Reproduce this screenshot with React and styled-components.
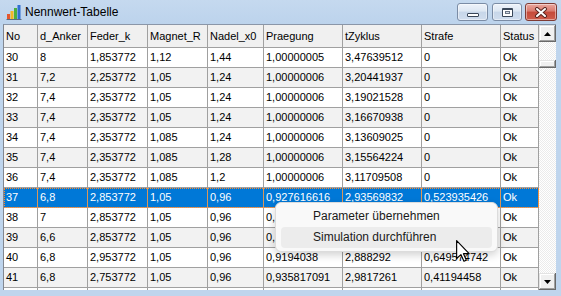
import React from "react";
import styled, { createGlobalStyle } from "styled-components";

const GlobalStyle = createGlobalStyle`
  html, body { margin: 0; padding: 0; background: #ffffff; }
  body { font-family: "Liberation Sans", Arial, sans-serif; }
  * { box-sizing: border-box; }
`;

const COLS = "34px 50px 60px 60px 56px 79px 79px 79px 38px";

const Window = styled.div`
  position: relative;
  width: 561px;
  height: 296px;
  background: #bfd5ed;
  display: flex;
  flex-direction: column;
  overflow: hidden;
`;

const TitleBar = styled.div`
  height: 24px;
  display: flex;
  align-items: flex-start;
  padding: 0 4px 0 6px;
  background: linear-gradient(#c5d9ef, #bcd3ec);
`;

const AppIcon = styled.svg`
  width: 16px;
  height: 16px;
  margin-top: 4px;
  margin-right: 3px;
  flex: none;
`;

const Title = styled.span`
  font-size: 12px;
  line-height: 24px;
  color: #000;
`;

const Captions = styled.div`
  margin-left: auto;
  margin-top: 3px;
  display: flex;
`;

const CapButton = styled.div`
  width: ${(p) => p.$w}px;
  height: 18px;
  margin-left: ${(p) => p.$gap || 0}px;
  border: 1px solid ${(p) => (p.$close ? "#7e3b34" : "#7b8ca5")};
  border-radius: 3px;
  display: flex;
  align-items: center;
  justify-content: center;
  background: ${(p) =>
    p.$close
      ? "linear-gradient(#eaa79f 0%, #d97a6e 45%, #c54a3a 50%, #cf5d4c 100%)"
      : "linear-gradient(#eef3fa 0%, #dde7f3 45%, #c7d6e9 50%, #d0ddee 100%)"};
  box-shadow: inset 0 0 0 1px rgba(255, 255, 255, 0.45);
`;

const MinGlyph = styled.div`
  width: 12px;
  height: 4px;
  margin-top: 6px;
  background: #fff;
  border: 1px solid #3a4759;
  border-radius: 1px;
`;

const MaxGlyph = styled.div`
  width: 11px;
  height: 9px;
  background: #fff;
  border: 1px solid #3a4759;
  border-top-width: 2px;
  border-radius: 1px;
  display: flex;
  align-items: center;
  justify-content: center;
`;

const MaxInner = styled.div`
  width: 5px;
  height: 3px;
  border: 1px solid #6a7585;
  background: #d4dbe5;
`;

const Body = styled.div`
  flex: 1;
  min-height: 0;
  display: flex;
  padding: 0 5px 6px 3px;
`;

const Frame = styled.div`
  flex: 1;
  display: flex;
  border-top: 1px solid #8a96a8;
  border-left: 1px solid #828790;
  overflow: hidden;
`;

const Grid = styled.div`
  width: 535px;
  background: #fff;
  overflow: hidden;
`;

const HeaderRow = styled.div`
  display: grid;
  grid-template-columns: ${COLS};
  height: 23px;
`;

const HeaderCell = styled.div`
  background: #f0f0f0;
  border-right: 1px solid #a0a0a0;
  border-bottom: 1px solid #a0a0a0;
  padding-left: 2px;
  font-size: 11px;
  line-height: 22px;
  color: #000;
  white-space: nowrap;
  overflow: hidden;
`;

const Row = styled.div`
  display: grid;
  grid-template-columns: ${COLS};
  height: 20px;
  background: ${(p) => (p.$selected ? "#0078d7" : p.$alt ? "#f2f2f2" : "#ffffff")};
  color: ${(p) => (p.$selected ? "#ffffff" : "#000000")};
  outline: ${(p) => (p.$selected ? "1px dotted #ff8a2e" : "none")};
  outline-offset: -1px;
`;

const Cell = styled.div`
  border-right: 1px solid ${(p) => (p.$selected ? "#d8965a" : "#a0a0a0")};
  border-bottom: 1px solid #a0a0a0;
  padding-left: 2px;
  font-size: 11px;
  line-height: 19px;
  white-space: nowrap;
  overflow: hidden;
`;

const Scrollbar = styled.div`
  width: 17px;
  display: flex;
  flex-direction: column;
  background: repeating-conic-gradient(#ffffff 0 25%, #ebebeb 0 50%) 0 0 / 2px 2px;
`;

const ScrollButton = styled.div`
  height: ${(p) => p.$h || 17}px;
  flex: none;
  display: flex;
  align-items: center;
  justify-content: center;
  background: #f0f0f0;
  box-shadow: inset -1px -1px #696969, inset 1px 1px #e3e3e3,
    inset -2px -2px #a0a0a0, inset 2px 2px #ffffff;
`;

const Track = styled.div`
  flex: 1;
  padding-top: 18px;
`;

const Arrow = styled.svg`
  width: 7px;
  height: 4px;
`;

const Menu = styled.div`
  position: absolute;
  left: 275px;
  top: 202px;
  width: 223px;
  padding: 3px 5px;
  background: #f9f9f9;
  border: 1px solid #dcdcdc;
  border-radius: 6px;
  box-shadow: 0 3px 8px rgba(0, 0, 0, 0.18);
`;

const MenuItem = styled.div`
  height: 21px;
  padding-left: 32px;
  font-size: 12px;
  line-height: 21px;
  color: #1a1a1a;
  border-radius: 4px;
  background: ${(p) => (p.$hover ? "#ececec" : "transparent")};
`;

const Cursor = styled.svg`
  position: absolute;
  left: 456px;
  top: 240px;
  width: 14px;
  height: 22px;
`;

const headers = ["No", "d_Anker", "Feder_k", "Magnet_R", "Nadel_x0", "Praegung", "tZyklus", "Strafe", "Status"];

const rows = [
  ["30", "8", "1,853772", "1,12", "1,44", "1,00000005", "3,47639512", "0", "Ok"],
  ["31", "7,2", "2,253772", "1,05", "1,24", "1,00000006", "3,20441937", "0", "Ok"],
  ["32", "7,4", "2,353772", "1,05", "1,24", "1,00000006", "3,19021528", "0", "Ok"],
  ["33", "7,4", "2,353772", "1,05", "1,24", "1,00000006", "3,16670938", "0", "Ok"],
  ["34", "7,4", "2,353772", "1,085", "1,24", "1,00000006", "3,13609025", "0", "Ok"],
  ["35", "7,4", "2,353772", "1,085", "1,28", "1,00000006", "3,15564224", "0", "Ok"],
  ["36", "7,4", "2,353772", "1,085", "1,2", "1,00000006", "3,11709508", "0", "Ok"],
  ["37", "6,8", "2,853772", "1,05", "0,96", "0,927616616", "2,93569832", "0,523935426", "Ok"],
  ["38", "7", "2,853772", "1,05", "0,96", "0,", "", "", "Ok"],
  ["39", "6,6", "2,853772", "1,05", "0,96", "0,", "", "", "Ok"],
  ["40", "6,8", "2,953772", "1,05", "0,96", "0,9194038", "2,888292", "0,649574742", "Ok"],
  ["41", "6,8", "2,753772", "1,05", "0,96", "0,935817091", "2,9817261", "0,41194458", "Ok"],
  ["", "", "", "", "", "", "", "", ""],
];

export default function App() {
  return (
    <>
      <GlobalStyle />
      <Window>
        <TitleBar>
          <AppIcon viewBox="0 0 16 16">
            <rect x="1" y="10" width="3" height="5" fill="#e4572e" />
            <rect x="4.5" y="7" width="3" height="8" fill="#f2b824" />
            <rect x="8" y="4" width="3" height="11" fill="#4caf3f" />
            <rect x="11.5" y="1" width="3" height="14" fill="#2f6fd1" />
            <rect x="0.5" y="15" width="15" height="1" fill="#5a6b80" />
          </AppIcon>
          <Title>Nennwert-Tabelle</Title>
          <Captions>
            <CapButton $w={31}>
              <MinGlyph />
            </CapButton>
            <CapButton $w={30} $gap={4}>
              <MaxGlyph>
                <MaxInner />
              </MaxGlyph>
            </CapButton>
            <CapButton $w={32} $gap={3} $close>
              <svg width="14" height="11" viewBox="0 0 14 11">
                <path d="M3 2 L11 9 M11 2 L3 9" stroke="#5a2520" strokeWidth="4" strokeLinecap="round" />
                <path d="M3 2 L11 9 M11 2 L3 9" stroke="#ffffff" strokeWidth="2" strokeLinecap="round" />
              </svg>
            </CapButton>
          </Captions>
        </TitleBar>
        <Body>
          <Frame>
            <Grid>
              <HeaderRow>
                {headers.map((h) => (
                  <HeaderCell key={h}>{h}</HeaderCell>
                ))}
              </HeaderRow>
              {rows.map((r, i) => {
                const selected = r[0] === "37";
                return (
                  <Row key={i} $alt={i % 2 === 1} $selected={selected}>
                    {r.map((c, j) => (
                      <Cell key={j} $selected={selected}>
                        {c}
                      </Cell>
                    ))}
                  </Row>
                );
              })}
            </Grid>
            <Scrollbar>
              <ScrollButton>
                <Arrow viewBox="0 0 7 4">
                  <polygon points="3.5,0 7,4 0,4" fill="#000" />
                </Arrow>
              </ScrollButton>
              <Track>
                <ScrollButton $h={8} />
              </Track>
              <ScrollButton>
                <Arrow viewBox="0 0 7 4">
                  <polygon points="0,0 7,0 3.5,4" fill="#000" />
                </Arrow>
              </ScrollButton>
            </Scrollbar>
          </Frame>
        </Body>
        <Menu>
          <MenuItem>Parameter übernehmen</MenuItem>
          <MenuItem $hover>Simulation durchführen</MenuItem>
        </Menu>
        <Cursor viewBox="0 0 12 19">
          <path
            d="M0.5 0.5 L0.5 16 L4.2 12.6 L6.8 18.3 L8.9 17.4 L6.4 11.8 L11.3 11.8 Z"
            fill="#ffffff"
            stroke="#000000"
            strokeWidth="1"
            strokeLinejoin="round"
          />
        </Cursor>
      </Window>
    </>
  );
}
